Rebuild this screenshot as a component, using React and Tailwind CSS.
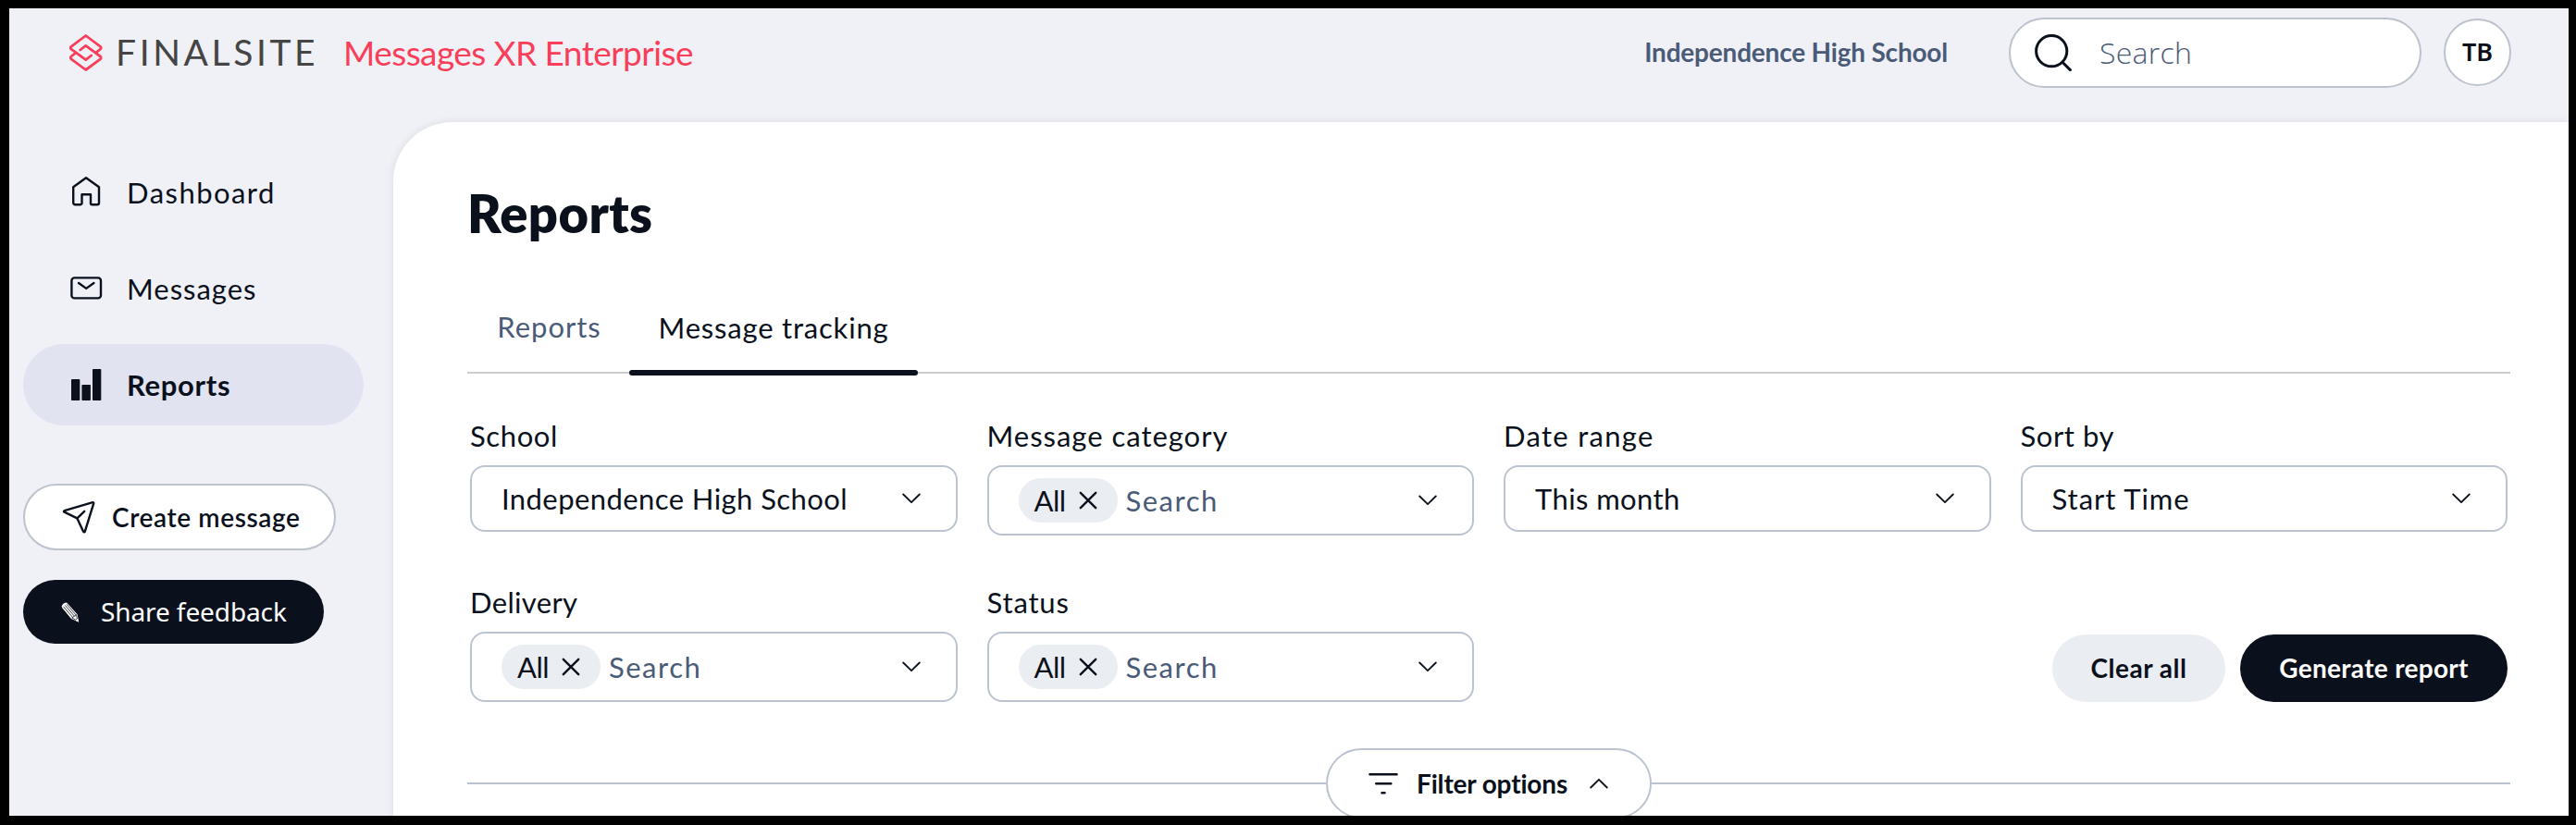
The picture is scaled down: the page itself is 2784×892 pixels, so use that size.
import React from 'react';

const ChevronIcon = ({ up = false }) => (
  <svg width="20" height="12" viewBox="0 0 20 12" fill="none" stroke="#0a111c" strokeWidth="1.8" strokeLinecap="round" strokeLinejoin="round">
    <path d={up ? 'M1.2 10.5 10 1.8l8.8 8.7' : 'M1.2 1.5 10 10.2l8.8-8.7'} />
  </svg>
);

const CloseIcon = () => (
  <svg width="20" height="20" viewBox="0 0 20 20" fill="none" stroke="#0a111c" strokeWidth="2.4" strokeLinecap="round">
    <path d="M1.8 1.8l16.4 16.4M18.2 1.8 1.8 18.2" />
  </svg>
);

const LogoIcon = () => (
  <svg width="36" height="40" viewBox="0 0 36 40" fill="none" stroke="#f93e59" strokeWidth="2.8" strokeLinecap="round" strokeLinejoin="round">
    <path d="M28.6 20l4.9-3.9q1.4-1.4 0-2.8L17.7 1.5 2 13.3q-1.4 1.4 0 2.8l15.7 11.5 6-4.6" />
    <path d="M6.9 20 2 24q-1.4 1.4 0 2.8l15.7 11.7 15.8-11.7q1.4-1.4 0-2.8L17.7 12.4l-6 4.6" />
  </svg>
);

const HomeIcon = () => (
  <svg width="36" height="36" viewBox="0 0 36 36" fill="none" stroke="#0a111c" strokeWidth="2.4" strokeLinecap="round" strokeLinejoin="round">
    <path d="M17 2.3 31 12.3V29.2a2 2 0 0 1-2 2h-5.5a1.5 1.5 0 0 1-1.5-1.5V20.3h-9.5v9.4a1.5 1.5 0 0 1-1.5 1.5H5.2a2 2 0 0 1-2-2V12.3Z" />
  </svg>
);

const MailIcon = () => (
  <svg width="36" height="36" viewBox="0 0 36 36" fill="none" stroke="#0a111c" strokeWidth="2.4" strokeLinecap="round" strokeLinejoin="round">
    <rect x="1.4" y="6.4" width="31.6" height="22" rx="3" />
    <path d="M9 12l8.2 5.9L25.4 12" />
  </svg>
);

const BarsIcon = () => (
  <svg width="36" height="36" viewBox="0 0 36 36" fill="#0a111c">
    <rect x="1" y="12" width="9.3" height="23" rx="0.8" />
    <rect x="12.4" y="18" width="9.5" height="17" rx="0.8" />
    <rect x="24" y="1" width="9.3" height="34" rx="0.8" />
  </svg>
);

const SendIcon = () => (
  <svg width="36" height="36" viewBox="0 0 36 36" fill="none" stroke="#0a111c" strokeWidth="2.4" strokeLinecap="round" strokeLinejoin="round">
    <path d="M33.2 2.2 2.6 11.2q-1.4.7 0 1.5l13.800 6.700 6.700 14.300q.9 1.400 1.700 0L34.200 3.300q.2-1.100-1-1.100Z" />
    <path d="M16.4 19.4l7.8-7.6" />
  </svg>
);

const PencilIcon = () => (
  <svg width="20" height="22" viewBox="0 0 20 22" fill="none">
    <path d="M.6 4.2Q2 1 5 .5q1.2 0 2 .9L17.6 13.2 19.2 21.8 11 17.9 1.2 6.2Z" fill="#fff" />
    <path d="M2.5 4.8l10.3 12M4.3 3.4l10.300 12M6 2.2l10 11.600M11.800 17l4.600-3.400 1 4.200-1.800 1.300Z" stroke="#0a111c" strokeWidth="0.8" />
  </svg>
);

const SearchIcon = () => (
  <svg width="40" height="40" viewBox="0 0 40 40" fill="none" stroke="#0a111c" strokeWidth="3" strokeLinecap="round">
    <circle cx="18.2" cy="18.2" r="16.6" />
    <path d="M30 30.2l8.400 8.400" />
  </svg>
);

const FilterIcon = () => (
  <svg width="32" height="24" viewBox="0 0 32 24" stroke="#0a111c" strokeWidth="2.6" strokeLinecap="round">
    <path d="M1.5 2.3h29M8.3 12.3h16M14.5 22.2h3" />
  </svg>
);

const navItems = [
  { label: 'Dashboard', icon: HomeIcon, className: 'tracking-[1.46px]' },
  { label: 'Messages', icon: MailIcon, className: 'tracking-[0.98px]' },
  { label: 'Reports', icon: BarsIcon, className: 'bg-[#e1e3f0] font-bold tracking-[0.67px]' },
];

const Header = () => (
  <header className="flex h-[123px] shrink-0 items-start justify-between pt-[10px] pr-[62px] pl-[65px]">
    <div className="flex h-[75px] items-center text-[39px] leading-none whitespace-nowrap">
      <LogoIcon />
      <span className="ml-[14px] w-[246px] pb-px tracking-[3.6px] text-[#454545]">FINALSITE</span>
      <span className="pb-px text-[37px] tracking-[-0.57px] text-[#f93e59]">Messages XR Enterprise</span>
    </div>
    <div className="flex h-[75px] items-center">
      <span className="mr-[66px] pb-px text-[28px] font-bold tracking-[-0.2px] text-[#4a5b78]">Independence High School</span>
      <div className="mr-[24px] flex h-[76px] w-[446px] items-center rounded-full border-2 border-[#bcc3cd] bg-white pl-[26px]">
        <SearchIcon />
        <span className="ml-[30px] font-['Open_Sans',sans-serif] text-[32px] font-light tracking-[0.27px] text-[#4a5b78]">Search</span>
      </div>
      <div className="flex size-[73px] items-center justify-center rounded-full border-2 border-[#bcc3cd] bg-white font-['Noto_Sans',sans-serif] text-[27px] font-semibold">
        TB
      </div>
    </div>
  </header>
);

const Sidebar = () => (
  <aside className="w-[415px] shrink-0 pt-[32px] pl-[15px]">
    <nav className="flex flex-col gap-4">
      {navItems.map(({ label, icon: Icon, className }) => (
        <a key={label} className={`flex h-[88px] w-[368px] items-center gap-[25px] rounded-full px-[51px] text-[31px] ${className}`}>
          <Icon />
          {label}
        </a>
      ))}
    </nav>
    <button className="mt-[63px] flex h-[72px] w-[338px] items-center rounded-full border-2 border-[#bcc3cd] bg-white pl-[40px] text-[28px] font-semibold tracking-[0.6px]">
      <SendIcon />
      <span className="ml-[18px]">Create message</span>
    </button>
    <button className="mt-[32px] flex h-[69px] w-[325px] items-center rounded-full bg-[#0a111c] pl-[41px] font-['Noto_Sans',sans-serif] text-[28px] tracking-[-0.1px] text-white">
      <PencilIcon />
      <span className="ml-[23px] pb-px">Share feedback</span>
    </button>
  </aside>
);

const Tabs = () => (
  <div className="mt-[43px] flex h-[98px] border-b-2 border-[#cccccc] text-[31px]">
    <div className="flex w-[175px] items-center justify-center pb-px pl-[2px] tracking-[0.98px] text-[#4a5b78]">Reports</div>
    <div className="-mb-[4px] flex w-[312px] flex-col">
      <span className="flex h-[98px] items-center justify-center pb-[2px] tracking-[0.8px]">Message tracking</span>
      <span className="-mt-[4px] h-[6px] shrink-0 rounded-[3px] bg-[#0a111c]" />
    </div>
  </div>
);

const Field = ({ label, labelClass, children }) => (
  <div>
    <div className={`mb-[12px] text-[31px] leading-[40px] ${labelClass}`}>{label}</div>
    {children}
  </div>
);

const Select = ({ label, labelClass, value, valueClass }) => (
  <Field label={label} labelClass={labelClass}>
    <div className="flex h-[72px] items-center justify-between rounded-2xl border-2 border-[#bcc3d0] pr-[38px] pl-[32px] text-[31px]">
      <span className={valueClass}>{value}</span>
      <ChevronIcon />
    </div>
  </Field>
);

const MultiSelect = ({ label, labelClass }) => (
  <Field label={label} labelClass={labelClass}>
    <div className="flex h-[76px] items-center rounded-2xl border-2 border-[#bcc3d0] pr-[38px] pl-[32px] text-[31px]">
      <div className="flex h-[48px] w-[107px] items-center rounded-full bg-[#eaedf1] pl-[17px]">
        <span className="w-[48px] tracking-[-0.5px]">All</span>
        <CloseIcon />
      </div>
      <span className="ml-[9px] flex-1 tracking-[1.5px] text-[#4a5b78]">Search</span>
      <ChevronIcon />
    </div>
  </Field>
);

const Filters = () => (
  <div className="mt-[47px] grid grid-cols-4 gap-x-8 gap-y-[52px] pr-[3px] pl-[3px]">
    <Select label="School" labelClass="tracking-[0.6px]" value="Independence High School" valueClass="tracking-[0.42px]" />
    <MultiSelect label="Message category" labelClass="tracking-[0.98px]" />
    <Select label="Date range" labelClass="tracking-[1.3px]" value="This month" valueClass="tracking-[0.4px]" />
    <Select label="Sort by" labelClass="tracking-[0.57px]" value="Start Time" valueClass="tracking-[0.95px]" />
    <MultiSelect label="Delivery" labelClass="tracking-[0.33px]" />
    <MultiSelect label="Status" labelClass="tracking-[0.83px]" />
    <div className="col-span-2 flex items-end justify-end gap-4 text-[28px] font-bold">
      <button className="h-[73px] w-[187px] rounded-full bg-[#eaedf1] pb-[2px] tracking-[0.49px]">Clear all</button>
      <button className="h-[73px] w-[289px] rounded-full bg-[#0a111c] pb-[2px] tracking-[0.31px] text-white">Generate report</button>
    </div>
  </div>
);

const FilterToggle = () => (
  <div className="mt-[50px] flex items-center">
    <div className="h-[2px] flex-1 bg-[#bcc3d0]" />
    <button className="flex h-[76px] w-[352px] items-center rounded-full border-2 border-[#bcc3d0] bg-white pl-[44px] text-[28px] font-bold tracking-[-0.16px]">
      <FilterIcon />
      <span className="ml-[20px] w-[187px] pb-px text-left">Filter options</span>
      <ChevronIcon up />
    </button>
    <div className="h-[2px] flex-1 bg-[#bcc3d0]" />
  </div>
);

const App = () => {
  return (
    <div className="h-[892px] w-[2784px] overflow-hidden bg-black pt-[9px] pr-[8px] pb-[10px] pl-[10px] font-[Lato,sans-serif] text-[#0a111c]">
      <div className="flex h-[873px] flex-col overflow-hidden bg-[#f0f1f7]">
        <Header />
        <div className="flex min-h-0 flex-1">
          <Sidebar />
          <main className="h-[900px] flex-1 rounded-tl-[64px] bg-white pt-[67px] pr-[63px] pl-[80px] shadow-[0_0_10px_rgba(10,17,28,0.09)]">
            <h1 className="text-[56px] leading-[64px] font-extrabold tracking-[0.4px]">Reports</h1>
            <Tabs />
            <Filters />
            <FilterToggle />
          </main>
        </div>
      </div>
    </div>
  );
};

export default App;
